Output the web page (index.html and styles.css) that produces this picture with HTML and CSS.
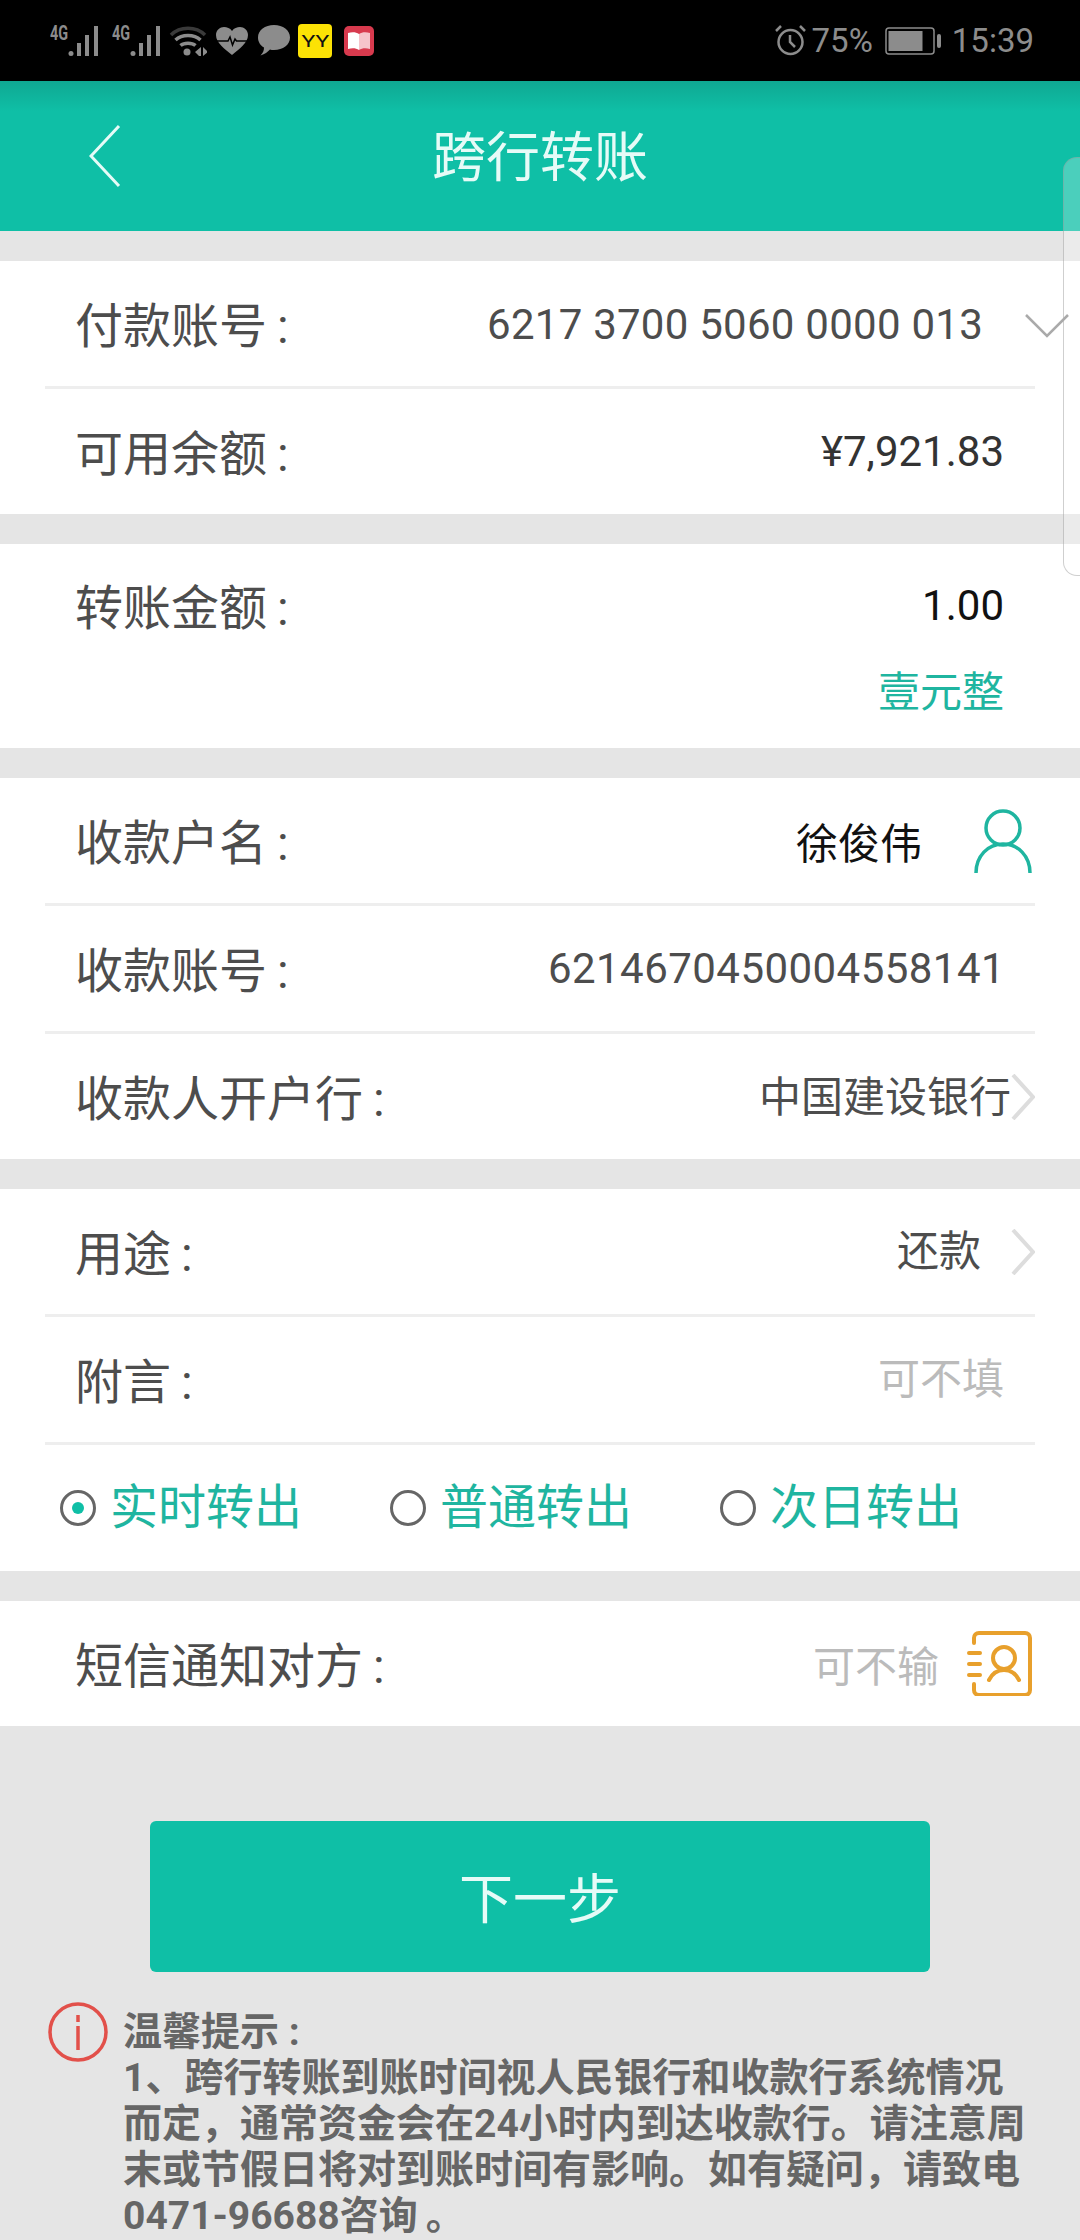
FILE: index.html
```html
<!DOCTYPE html>
<html lang="zh-CN">
<head>
    <meta charset="UTF-8">
    <title>跨行转账</title>
    <link rel="stylesheet" href="styles.css">
</head>
<body>
    <div class="status-bar">
        <div class="status-left">
            <div class="signal"><span class="signal-tag">4G</span>
                <svg width="34" height="32" viewBox="0 0 34 32"><g fill="#8c8c8c"><circle cx="3" cy="28.5" r="2.5"/><rect x="9" y="18" width="4" height="13"/><rect x="17" y="10" width="4" height="21"/><rect x="26" y="1" width="4" height="30"/></g></svg>
            </div>
            <div class="signal"><span class="signal-tag">4G</span>
                <svg width="34" height="32" viewBox="0 0 34 32"><g fill="#8c8c8c"><circle cx="3" cy="28.5" r="2.5"/><rect x="9" y="18" width="4" height="13"/><rect x="17" y="10" width="4" height="21"/><rect x="26" y="1" width="4" height="30"/></g></svg>
            </div>
            <svg class="icon-wifi" width="38" height="32" viewBox="0 0 38 32"><g fill="none" stroke-width="3.5"><path d="M2 10C11 1 27 1 36 10" stroke="#3a3a3a"/><path d="M6.500 15C13 9 25 9 31.500 15" stroke="#8c8c8c"/><path d="M11.500 20.500C15 17.500 23 17.500 26.500 20.500" stroke="#8c8c8c"/></g><g fill="#8c8c8c"><circle cx="18" cy="27" r="3.500"/><path d="M26 27l6-5v9h-2zM34 22l5 5-5 4z"/></g></svg>
            <svg class="icon-heart" width="32" height="28" viewBox="0 0 32 28"><path d="M16 28C9 22 0 16 0 8C0 3 4 0 8 0C11 0 14 1 16 4C18 1 21 0 24 0C28 0 32 3 32 8C32 16 23 22 16 28Z" fill="#8c8c8c"/><path d="M1 14H12L14 10L16.500 18L19 12L20.500 14H31" fill="none" stroke="#000" stroke-width="1.500"/></svg>
            <svg class="icon-bubble" width="32" height="31" viewBox="0 0 32 31"><path d="M16 0C25 0 32 5 32 12.500C32 20 25 25 16 25C14.500 25 13 25 12 24.500C9.500 27 7 29 2.500 30.500C5 28 6 25.500 6 22.500C2.500 20.500 0 17 0 12.500C0 5 7 0 16 0Z" fill="#8c8c8c"/></svg>
            <div class="icon-yy"><span>YY</span></div>
            <svg class="icon-book" width="30" height="30" viewBox="0 0 30 30"><rect width="30" height="30" rx="5" fill="#d83a4e"/><path d="M4 7C8 6 12 6 15 8V24C12 22 8 22 4 23Z" fill="#fff"/><path d="M15 8C18 6 22 6 26 7V23C22 22 18 22 15 24Z" fill="#f6c4cb"/></svg>
        </div>
        <div class="status-right">
            <svg class="icon-alarm" width="31" height="31" viewBox="0 0 31 31"><g fill="none" stroke="#8c8c8c" stroke-width="2.500"><circle cx="15.500" cy="17" r="12"/><path d="M15 10v7l5 5M1 6l5-5M30 6l-5-5"/></g></svg>
            <span class="status-text">75%</span>
            <svg class="icon-battery" width="58" height="28" viewBox="0 0 58 28"><rect x="1" y="1" width="48" height="26" rx="3" fill="none" stroke="#8c8c8c" stroke-width="1.500"/><rect x="3.500" y="4" width="34" height="20" fill="#8c8c8c"/><rect x="52" y="7" width="4" height="14" rx="2" fill="#8c8c8c"/></svg>
            <span class="status-text status-time">15:39</span>
        </div>
    </div>

    <header class="title-bar">
        <svg class="back" width="32" height="64" viewBox="0 0 32 64"><path d="M30 2L2 32L30 62" fill="none" stroke="#e6fbf7" stroke-width="3"/></svg>
        <h1>跨行转账</h1>
    </header>

    <div class="side-handle"></div>

    <div class="content">
        <section class="group">
            <div class="row">
                <span class="label">付款账号 :</span>
                <span class="value value-account">6217 3700 5060 0000 013</span>
                <svg class="chevron-down" width="44" height="24" viewBox="0 0 44 24"><path d="M1 1L22 22L43 1" fill="none" stroke="#aaa" stroke-width="2.500"/></svg>
            </div>
            <div class="row">
                <span class="label">可用余额 :</span>
                <span class="value value-dark value-end">¥7,921.83</span>
            </div>
        </section>

        <section class="group">
            <div class="row row-amount">
                <span class="label">转账金额 :</span>
                <span class="value value-black value-end">1.00</span>
            </div>
            <div class="row-hint">壹元整</div>
        </section>

        <section class="group">
            <div class="row">
                <span class="label">收款户名 :</span>
                <span class="value value-black value-name">徐俊伟</span>
                <svg class="icon-person" width="58" height="64" viewBox="0 0 58 64"><g fill="none" stroke="#1fb5a0" stroke-width="3.500"><circle cx="29" cy="19" r="17"/><path d="M2 64C2 47 14 35 29 35C44 35 56 47 56 64"/></g></svg>
            </div>
            <div class="row">
                <span class="label">收款账号 :</span>
                <span class="value value-payee">6214670450004558141</span>
            </div>
            <div class="row">
                <span class="label">收款人开户行 :</span>
                <span class="value value-bank">中国建设银行</span>
                <svg class="chevron-right" width="24" height="46" viewBox="0 0 24 46"><path d="M2 1L22 23L2 45" fill="none" stroke="#ddd" stroke-width="4"/></svg>
            </div>
        </section>

        <section class="group">
            <div class="row">
                <span class="label">用途 :</span>
                <span class="value value-purpose">还款</span>
                <svg class="chevron-right" width="24" height="46" viewBox="0 0 24 46"><path d="M2 1L22 23L2 45" fill="none" stroke="#ddd" stroke-width="4"/></svg>
            </div>
            <div class="row">
                <span class="label">附言 :</span>
                <span class="value value-hint value-end">可不填</span>
            </div>
            <div class="radio-row">
                <div class="radio-item"><span class="radio radio-on"></span>实时转出</div>
                <div class="radio-item"><span class="radio"></span>普通转出</div>
                <div class="radio-item"><span class="radio"></span>次日转出</div>
            </div>
        </section>

        <section class="group">
            <div class="row row-sms">
                <span class="label">短信通知对方 :</span>
                <span class="value value-hint value-sms">可不输</span>
                <svg class="icon-contact" width="66" height="66" viewBox="0 0 66 66"><g fill="none" stroke="#e8a02c" stroke-width="4" stroke-linecap="round"><path d="M7 13V8C7 5 9 3 12 3H58C61 3 63 5 63 8V60C63 63 61 65 58 65H12C9 65 7 63 7 60V54"/><path d="M2 23H13M2 34H13M2 45H13"/><circle cx="37" cy="28" r="11"/><path d="M22 50C25 44 30 40 37 40C44 40 49 44 52 50"/></g></svg>
            </div>
        </section>

        <a class="next-btn">下一步</a>

        <div class="tips">
            <svg class="icon-info" width="60" height="60" viewBox="0 0 60 60"><circle cx="30" cy="30" r="28" fill="none" stroke="#e2504a" stroke-width="3.500"/><path d="M30 13V20M30 24V48" fill="none" stroke="#e2504a" stroke-width="3.500"/></svg>
            <p>温馨提示 :<br>1、跨行转账到账时间视人民银行和收款行系统情况<br>而定&#65292;通常资金会在24小时内到达收款行。请注意周<br>末或节假日将对到账时间有影响。如有疑问&#65292;请致电<br>0471-96688咨询&#8201;。</p>
        </div>
    </div>
</body>
</html>
```

FILE: styles.css
```css
body {
    margin: 0;
    width: 1080px;
    height: 2240px;
    overflow: hidden;
    position: relative;
    background-color: #e5e5e5;
    font-family: Roboto, "Noto Sans CJK SC", sans-serif;
}
.status-bar {
    height: 81px;
    background-color: #000;
    display: flex;
    justify-content: space-between;
    align-items: center;
    padding: 0 46px 0 50px;
    box-sizing: border-box;
}
.status-left, .status-right {
    display: flex;
    align-items: center;
}
.status-left {
    gap: 10px;
}
.signal {
    display: flex;
    align-items: flex-start;
    height: 32px;
}
.signal-tag {
    width: 18px;
    color: #8c8c8c;
    font-size: 20px;
    font-weight: 700;
    line-height: 17px;
    transform: scaleX(0.72);
    transform-origin: left top;
    white-space: nowrap;
}
.icon-wifi {
    margin-left: -5px;
}
.icon-heart {
    margin-left: -1px;
}
.icon-yy {
    width: 34px;
    height: 34px;
    margin-left: -2px;
    border-radius: 4px;
    background-color: #fce205;
    color: #111;
    font-size: 17px;
    line-height: 34px;
    text-align: center;
}
.icon-yy span {
    display: inline-block;
    transform: scaleX(1.35);
}
.icon-book {
    margin-left: 2px;
}
.status-text {
    color: #8c8c8c;
    font-size: 33px;
    line-height: 40px;
}
.icon-alarm {
    margin-right: 6px;
    margin-left: -2px;
}
.icon-battery {
    margin: 0 9px 0 12px;
}
.title-bar {
    height: 150px;
    background: linear-gradient(#0fa892, #0fbfa6 30px);
    display: flex;
    align-items: center;
    justify-content: center;
    position: relative;
}
.title-bar h1 {
    margin: 6px 0 0;
    color: #e6fbf7;
    font-size: 54px;
    font-weight: 400;
    line-height: 60px;
}
.back {
    position: absolute;
    left: 89px;
    top: 43px;
}
.side-handle {
    position: absolute;
    right: 0;
    top: 157px;
    width: 16px;
    height: 417px;
    background-color: rgba(255, 255, 255, 0.25);
    border: 1px solid rgba(150, 150, 150, 0.45);
    border-right: none;
    border-radius: 14px 0 0 14px;
}
.content {
    padding-top: 30px;
}
.group {
    background-color: #fff;
    margin-bottom: 30px;
}
.row {
    height: 128px;
    margin: 0 45px;
    padding-left: 30px;
    box-sizing: border-box;
    border-bottom: 3px solid #eee;
    display: flex;
    align-items: center;
}
.row:last-child {
    border-bottom: none;
    height: 125px;
}
.label {
    margin-top: 6px;
    color: #4d4d4d;
    font-size: 48px;
    line-height: 60px;
    white-space: pre;
    word-spacing: -2px;
}
.value {
    margin-left: auto;
    color: #4d4d4d;
    font-size: 42px;
    line-height: 54px;
}
.value-dark {
    color: #333;
}
.value-black {
    color: #111;
}
.value-hint {
    color: #bbb;
}
.value-end {
    margin-right: 31px;
}
.value-account {
    margin-top: 3px;
    margin-right: 52px;
    letter-spacing: 0.25px;
}
.value-payee {
    margin-right: 30px;
    letter-spacing: 0.45px;
}
.chevron-down {
    position: absolute;
    right: 11px;
    top: 314px;
}
.value-name {
    margin-top: 8px;
    margin-right: 52px;
}
.icon-person {
    margin-right: 3px;
}
.value-bank {
    margin-top: 2px;
    margin-right: 0;
}
.value-purpose {
    margin-right: 30px;
}
.row-amount {
    height: 132px;
    border-bottom: none;
}
.row-amount .label {
    margin-top: -2px;
}
.row-amount .value {
    margin-top: -8px;
}
.row-hint {
    height: 82px;
    margin-top: -10px;
    margin-right: 76px;
    text-align: right;
    color: #1fb5a0;
    font-size: 42px;
    line-height: 54px;
}
.radio-row {
    height: 126px;
    padding-left: 60px;
    display: flex;
    align-items: center;
}
.radio-item {
    width: 330px;
    display: flex;
    align-items: center;
    gap: 14px;
    color: #1fb5a0;
    font-size: 48px;
    line-height: 60px;
}
.radio {
    width: 36px;
    height: 36px;
    border: 3px solid #666;
    border-radius: 50%;
    box-sizing: border-box;
    display: flex;
    align-items: center;
    justify-content: center;
}
.radio-on::after {
    content: "";
    width: 12px;
    height: 12px;
    border-radius: 50%;
    background-color: #0fbfa6;
}
.value-sms {
    margin-top: 8px;
    margin-right: 28px;
}
.icon-contact {
    margin-top: -2px;
    margin-right: 2px;
}
.next-btn {
    display: block;
    width: 780px;
    height: 151px;
    margin: 95px 0 0 150px;
    border-radius: 6px;
    background-color: #0fbfa6;
    color: #e6fbf7;
    font-size: 54px;
    line-height: 159px;
    text-align: center;
}
.tips {
    display: flex;
    align-items: flex-start;
    margin: 30px 0 0 48px;
    gap: 15px;
}
.tips p {
    margin: 7px 0 0;
    color: #666;
    font-size: 39px;
    font-weight: 700;
    line-height: 46px;
    white-space: nowrap;
}
```
